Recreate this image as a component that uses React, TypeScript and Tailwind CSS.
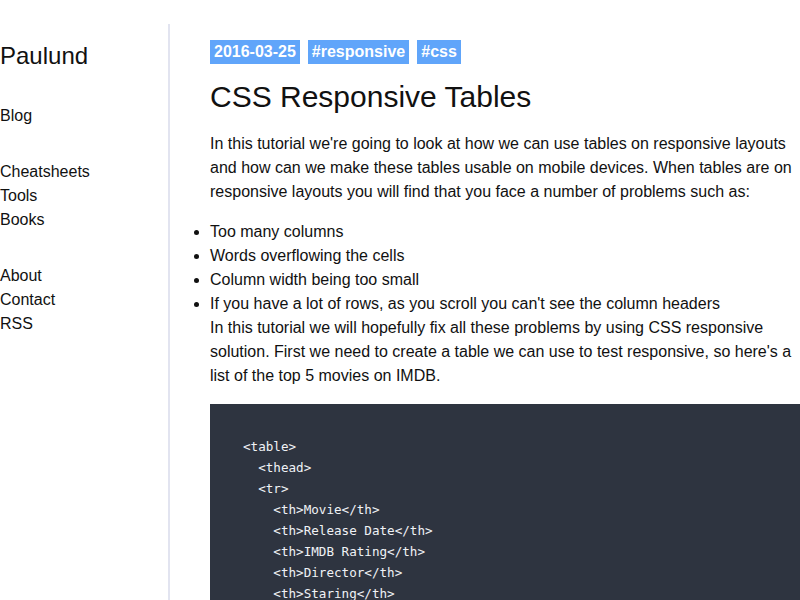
import React from 'react';

const tags = ['2016-03-25', '#responsive', '#css'];

const problems = [
  'Too many columns',
  'Words overflowing the cells',
  'Column width being too small',
  "If you have a lot of rows, as you scroll you can't see the column headers",
];

const codeLines = [
  '<table>',
  '  <thead>',
  '  <tr>',
  '    <th>Movie</th>',
  '    <th>Release Date</th>',
  '    <th>IMDB Rating</th>',
  '    <th>Director</th>',
  '    <th>Staring</th>',
  '  </tr>',
  '  </thead>',
];

export default function App() {
  return (
    <div className="h-[600px] overflow-hidden bg-white pt-6 text-[#111] font-['Liberation_Sans',Arial,sans-serif]">
      <div className="flex h-full">
        <aside className="w-[170px] shrink-0 border-r-2 border-[#e2e4f0] pt-4">
          <div className="text-2xl leading-8">Paulund</div>
          <nav className="text-base leading-6">
            <div className="mt-8">
              <a href="#">Blog</a>
            </div>
            <div className="mt-8 flex flex-col">
              <a href="#">Cheatsheets</a>
              <a href="#">Tools</a>
              <a href="#">Books</a>
            </div>
            <div className="mt-8 flex flex-col">
              <a href="#">About</a>
              <a href="#">Contact</a>
              <a href="#">RSS</a>
            </div>
          </nav>
        </aside>

        <main className="min-w-0 flex-1 pl-10 pt-4">
          <div className="flex gap-2">
            {tags.map((t) => (
              <span key={t} className="bg-[#60a5fa] px-1 text-base font-bold leading-6 text-white">
                {t}
              </span>
            ))}
          </div>
          <h1 className="mt-[15px] text-[30px] leading-9">CSS Responsive Tables</h1>
          <p className="mt-[17px] text-base leading-6">
            In this tutorial we're going to look at how we can use tables on responsive layouts and how can we make
            these tables usable on mobile devices. When tables are on responsive layouts you will find that you face a
            number of problems such as:
          </p>
          <ul className="mt-4 list-disc pl-0 text-base leading-6">
            {problems.map((p) => (
              <li key={p}>{p}</li>
            ))}
          </ul>
          <p className="text-base leading-6">
            In this tutorial we will hopefully fix all these problems by using CSS responsive solution. First we need to
            create a table we can use to test responsive, so here's a list of the top 5 movies on IMDB.
          </p>
          <pre className="mt-4 bg-[#2e3440] px-[33px] pt-8 pb-8 text-[12.6px] leading-[21px] text-[#f0f2f6] font-['DejaVu_Sans_Mono',monospace]">
            {codeLines.join('\n')}
          </pre>
        </main>
      </div>
    </div>
  );
}
